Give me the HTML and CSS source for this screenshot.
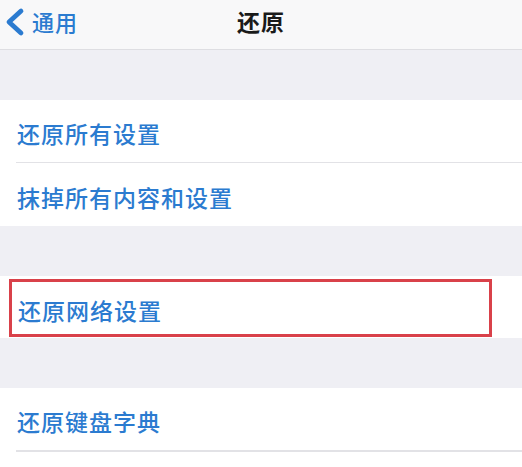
FILE: index.html
```html
<!DOCTYPE html>
<html lang="zh-CN">
<head>
  <meta charset="UTF-8"/>
  <meta name="viewport" content="width=device-width, initial-scale=1.0"/>
  <title>还原</title>
  <link rel="stylesheet" href="styles.css">
</head>
<body>

<!-- Nav bar -->
<header class="navbar">
  <a class="back" href="#">
    <svg width="22" height="30" viewBox="0 0 22 30"><path d="M18 4 L6 15 L18 26" fill="none" stroke="#2b7bd0" stroke-width="4.8" stroke-linecap="round" stroke-linejoin="round"/></svg>
    <span>通用</span>
  </a>
  <h1>还原</h1>
</header>

<div class="spacer"></div>

<section class="group">
  <div class="row">还原所有设置</div>
  <div class="row">抹掉所有内容和设置</div>
</section>

<div class="spacer"></div>

<section class="group">
  <div class="row marked"><span class="mark">还原网络设置</span></div>
</section>

<div class="spacer"></div>

<section class="group">
  <div class="row">还原键盘字典</div>
  <div class="row"></div>
</section>

</body>
</html>
```

FILE: styles.css
```css
:root{
  --blue:#2b7bd0;
  --bg:#efeff4;
  --line:#e2e2e6;
  --red:#d9414a;
}
*{margin:0;padding:0;box-sizing:border-box}
body{
  background:var(--bg);
  font-family:"Noto Sans CJK SC","Noto Sans",sans-serif;
  overflow:hidden;
}

/* --- Nav bar ------------------------------------------------------------ */
.navbar{
  position:relative;
  height:50px;
  background:#f8f8f9;
  border-bottom:1px solid #dedee2;
  display:flex;
  align-items:center;
  justify-content:center;
}
.navbar h1{
  font-size:23px;
  font-weight:700;
  letter-spacing:1px;
  color:#1a1a1a;
  line-height:1;
  margin-top:-6px;
}
.back{
  position:absolute;
  left:3px;
  top:7px;
  display:flex;
  align-items:center;
  gap:7px;
  text-decoration:none;
  color:var(--blue);
}
.back span{
  font-size:22px;
  font-weight:500;
  letter-spacing:1px;
  line-height:1;
  margin-top:-2px;
}

.spacer{height:50px}

/* --- Groups ------------------------------------------------------------- */
.group{background:#fff}
.row{
  height:63px;
  display:flex;
  align-items:center;
  padding:4px 0 0 1px;
  margin-left:16px;
  font-size:23px;
  font-weight:500;
  letter-spacing:1px;
  color:var(--blue);
  border-bottom:1px solid var(--line);
}
.group .row:last-child{border-bottom:none}
.group .row:first-child:last-child{height:62px}

.row.marked{
  margin-left:0;
  padding:3px 30px 1px 9px;
  align-items:stretch;
}
.mark{
  flex:1;
  display:flex;
  align-items:center;
  padding:3px 0 0 6px;
  border:3px solid var(--red);
}
.group:last-of-type .row:last-child{height:20px;border-top:2px solid var(--line)}
.group:last-of-type .row:first-child{height:62px;border-bottom:none}
```
